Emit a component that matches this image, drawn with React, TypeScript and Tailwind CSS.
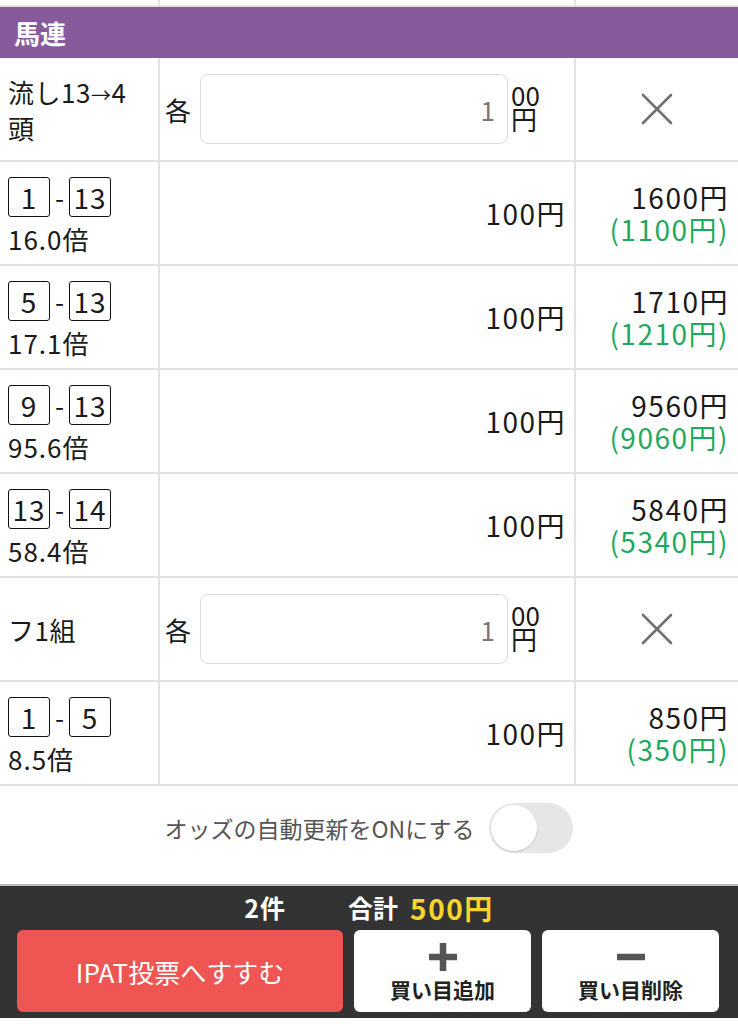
import React from 'react';

const bets = [
  { a: '1', b: '13', odds: '16.0倍', pay: '1600円', profit: '(1100円)' },
  { a: '5', b: '13', odds: '17.1倍', pay: '1710円', profit: '(1210円)' },
  { a: '9', b: '13', odds: '95.6倍', pay: '9560円', profit: '(9060円)' },
  { a: '13', b: '14', odds: '58.4倍', pay: '5840円', profit: '(5340円)' },
];

function Num({ n }: { n: string }) {
  return (
    <span className="inline-flex h-10 w-[42px] items-center justify-center rounded-[3px] border-[1.5px] border-[#111] text-[28px] leading-none tracking-[1px]">
      {n}
    </span>
  );
}

function Close() {
  return (
    <svg width="34" height="34" viewBox="0 0 34 34">
      <path d="M3 3 L31 31 M31 3 L3 31" stroke="#707070" strokeWidth="2.6" strokeLinecap="round" />
    </svg>
  );
}

function HeadRow({ label }: { label: React.ReactNode }) {
  return (
    <div className="flex h-[104px] border-b-2 border-[#e2e2e2]">
      <div className="flex w-[160px] items-center border-r-2 border-[#e2e2e2] pl-2 text-[26px] leading-[33px] tracking-[0.5px]">{label}</div>
      <div className="flex w-[416px] items-center border-r-2 border-[#e2e2e2] pl-[5px] text-[26px]">
        <span>各</span>
        <div className="ml-[9px] flex h-[70px] w-[308px] items-center justify-end rounded-lg border border-[#dcdcdc] pr-3 text-[26px] text-[#777]">1</div>
        <div className="ml-[3px] flex w-[40px] flex-col pb-[4px] text-[26px] leading-[24px]">
          <span>00</span>
          <span>円</span>
        </div>
      </div>
      <div className="flex flex-1 items-center justify-center">
        <Close />
      </div>
    </div>
  );
}

function BetRow({ a, b, odds, pay, profit }: (typeof bets)[number]) {
  return (
    <div className="flex h-[104px] border-b-2 border-[#e2e2e2]">
      <div className="w-[160px] border-r-2 border-[#e2e2e2] pl-2 pt-[15px]">
        <div className="flex items-center">
          <Num n={a} />
          <span className="mx-[5px] text-[26px] leading-none">-</span>
          <Num n={b} />
        </div>
        <div className="mt-[5px] text-[26px] leading-[34px] tracking-[1px]">{odds}</div>
      </div>
      <div className="flex w-[416px] items-center justify-end border-r-2 border-[#e2e2e2] pr-[8px] text-[28px] tracking-[1.5px]">100円</div>
      <div className="flex flex-1 flex-col items-end justify-center pr-[9px] text-[28px] leading-[32px] tracking-[1.5px]">
        <span>{pay}</span>
        <span className="text-[#1fa95c]">{profit}</span>
      </div>
    </div>
  );
}

export default function App() {
  return (
    <div className="relative h-[1024px] w-[738px] overflow-hidden bg-white font-['Noto_Sans_CJK_JP','Noto_Sans',sans-serif] text-[#1a1a1a]">
      <div className="flex h-[7px] border-b-2 border-[#e2e2e2]">
        <div className="w-[160px] border-r-2 border-[#e2e2e2]" />
        <div className="w-[416px] border-r-2 border-[#e2e2e2]" />
      </div>
      <div className="flex h-[51px] items-center bg-[#865a9b] pl-[14px] text-[26px] font-bold text-white">馬連</div>

      <HeadRow label={<span>流し13<span className="text-[20px]">→</span>4<br />頭</span>} />
      {bets.map(b => <BetRow key={b.a + b.b} {...b} />)}
      <HeadRow label="フ1組" />
      <BetRow a="1" b="5" odds="8.5倍" pay="850円" profit="(350円)" />

      <div className="flex h-[98px] items-center justify-center gap-[15px] pb-[14px]">
        <span className="text-[23px] text-[#555]">オッズの自動更新をONにする</span>
        <div className="flex h-[50px] w-[84px] items-center rounded-full bg-[#e6e6e6] px-[2px]">
          <div className="h-[46px] w-[46px] rounded-full bg-white shadow-[0_1px_2px_rgba(0,0,0,0.15)]" />
        </div>
      </div>

      <div className="h-[134px] border-t-2 border-[#bbb] bg-[#333333]">
        <div className="flex h-[44px] items-center justify-center text-[25px] font-bold text-white">
          <span className="tracking-[1px]">2件</span>
          <span className="ml-[62px]">合計</span>
          <span className="ml-[12px] text-[28px] tracking-[1.5px] text-[#f7d52b]">500円</span>
        </div>
        <div className="flex gap-[11px] pl-[17px] pr-[19px]">
          <button className="flex h-[82px] w-[326px] items-center justify-center rounded-md bg-[#ef5552] text-[26px] text-white">IPAT投票へすすむ</button>
          <button className="flex h-[82px] w-[177px] flex-col items-center justify-center rounded-md bg-white">
            <svg width="30" height="30" viewBox="0 0 30 30">
              <path d="M15 1 V29 M1 15 H29" stroke="#555" strokeWidth="6.5" />
            </svg>
            <span className="mt-[5px] text-[21px] font-bold leading-[24px] text-[#222]">買い目追加</span>
          </button>
          <button className="flex h-[82px] w-[177px] flex-col items-center justify-center rounded-md bg-white">
            <svg width="30" height="30" viewBox="0 0 30 30">
              <path d="M1 15 H29" stroke="#555" strokeWidth="6.5" />
            </svg>
            <span className="mt-[5px] text-[21px] font-bold leading-[24px] text-[#222]">買い目削除</span>
          </button>
        </div>
      </div>
    </div>
  );
}
